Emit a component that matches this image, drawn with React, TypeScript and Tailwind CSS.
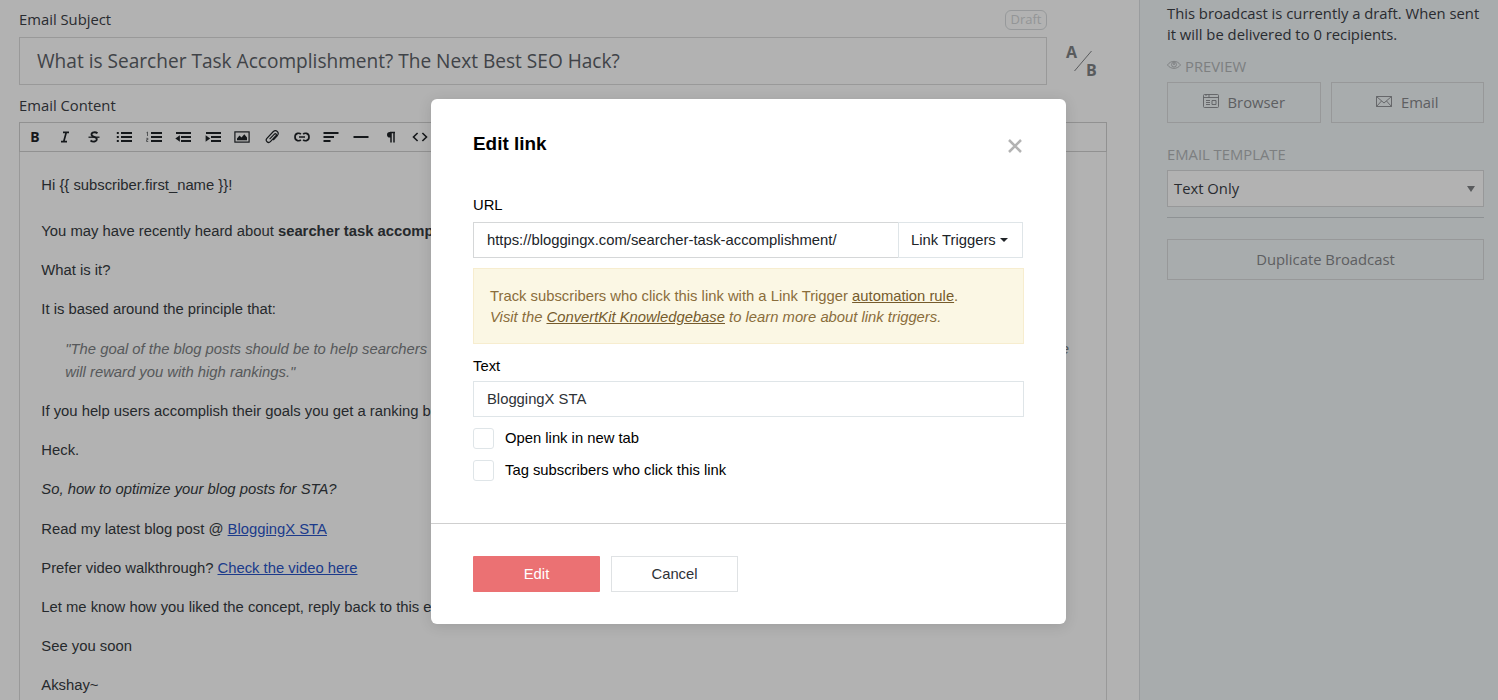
import type { ReactNode } from 'react'

function Icon({ children }: { children: ReactNode }) {
  return (
    <svg
      width="16"
      height="16"
      viewBox="0 0 16 16"
      fill="none"
      stroke="currentColor"
      strokeWidth="1.6"
      className="block shrink-0"
    >
      {children}
    </svg>
  )
}

const letter = 'flex w-4 justify-center text-[14px] leading-4'

const tools: { name: string; icon: ReactNode }[] = [
  { name: 'bold', icon: <span className={`${letter} font-["Noto_Sans"] font-bold`}>B</span> },
  {
    name: 'italic',
    icon: (
      <Icon>
        <path d="M6 3.300h6M4 12.700h6M9.300 3.300L6.700 12.700" strokeWidth="1.700" />
      </Icon>
    )
  },
  {
    name: 'strike',
    icon: (
      <Icon>
        <path
          d="M11.500 4.200C9.500 2.700 5.500 2.900 5.500 5.400c0 3 5.500 2 5.300 4.900-.2 2.700-4.300 2.800-6.300 1.200"
          strokeWidth="1.800"
        />
        <path d="M2.500 8.200h11" strokeWidth="1.300" />
      </Icon>
    )
  },
  {
    name: 'bullets',
    icon: (
      <Icon>
        <path d="M5 4h11M5 8h11M5 12h11" strokeWidth="2.200" />
        <path d="M.8 4h2M.8 8h2M.8 12h2" strokeWidth="2" />
      </Icon>
    )
  },
  {
    name: 'numbers',
    icon: (
      <Icon>
        <path d="M5 4h11M5 8h11M5 12h11" strokeWidth="2.200" />
        <path d="M.5 3.700l1-.7v4M.3 9.300h1.600v1.400H.6v1.800h1.600" strokeWidth=".6" />
      </Icon>
    )
  },
  {
    name: 'outdent',
    icon: (
      <Icon>
        <path d="M1 4h15M6 8h10M6 12h10" strokeWidth="2.200" />
        <path d="M.3 9.500l4.600-3.200v6.400z" fill="currentColor" stroke="none" />
      </Icon>
    )
  },
  {
    name: 'indent',
    icon: (
      <Icon>
        <path d="M1 4h15M6 8h10M6 12h10" strokeWidth="2.200" />
        <path d="M5.200 9.500L.6 6.300v6.400z" fill="currentColor" stroke="none" />
      </Icon>
    )
  },
  {
    name: 'image',
    icon: (
      <Icon>
        <rect x=".9" y="2.900" width="14.200" height="10.200" strokeWidth="1.200" />
        <path d="M3 11.300V9.500l2.500-3 2 2 2.800-3.300L13 8.500v2.800z" fill="currentColor" stroke="none" />
      </Icon>
    )
  },
  {
    name: 'attachment',
    icon: (
      <Icon>
        <path
          d="M5.600 10.200l4.800-5c1.200-1.100 2.600.2 1.600 1.500l-5.600 5.900c-2.200 2.300-5.600-.8-3.500-3.200l6.200-6.600c3-2.800 6.700.6 4.300 3.700l-4.200 4.500"
          strokeWidth="1.200"
        />
      </Icon>
    )
  },
  {
    name: 'link',
    icon: (
      <Icon>
        <path
          d="M6.800 5.200C5.800 3.800 1 3.600 1 8s4.800 4.200 5.800 2.800M9.200 5.200C10.200 3.800 15 3.600 15 8s-4.800 4.200-5.800 2.800M5 8h6"
          strokeWidth="1.700"
        />
      </Icon>
    )
  },
  {
    name: 'align',
    icon: (
      <Icon>
        <path d="M.5 4h15M.5 8h10.500M.5 12h7" strokeWidth="2" />
      </Icon>
    )
  },
  {
    name: 'rule',
    icon: (
      <Icon>
        <path d="M.5 8h15" strokeWidth="2" />
      </Icon>
    )
  },
  {
    name: 'paragraph',
    icon: (
      <Icon>
        <path d="M8 3v10.500M11 3v10.500M12 3.500H7" strokeWidth="1.500" />
        <path d="M8 3H6.800a2.800 2.800 0 000 5.600H8z" fill="currentColor" stroke="none" />
      </Icon>
    )
  },
  {
    name: 'code',
    icon: (
      <Icon>
        <path d="M5.600 4L1.500 8l4.100 4M10.400 4l4.100 4-4.100 4" strokeWidth="1.600" />
      </Icon>
    )
  }
]

function Toolbar() {
  return (
    <div className="flex h-[30px] shrink-0 items-center gap-[13.65px] border border-[#d0d0d0] pl-[7px] text-[#1f2327]">
      {tools.map((t) => (
        <span key={t.name}>{t.icon}</span>
      ))}
    </div>
  )
}

function EditorBody() {
  return (
    <div className='flex flex-1 flex-col gap-4 border-x border-[#dcdcdc] pt-[21.5px] pr-[21px] pl-[21.3px] font-["Liberation_Sans",sans-serif] text-[14.82px] leading-[23.2px] whitespace-nowrap text-[#363b41]'>
      <div>
        <p>Hi {'{{ subscriber.first_name }}'}!</p>
        <br />
        <p>
          You may have recently heard about <b>searcher task accomplishment</b>
        </p>
      </div>
      <p>What is it?</p>
      <p>It is based around the principle that:</p>
      <blockquote className="pr-[16px] pl-6 text-[#7c7f83] italic">
        <div className="flex justify-between">
          <span>"The goal of the blog posts should be to help searchers</span>
          <span>Google</span>
        </div>
        will reward you with high rankings."
      </blockquote>
      <p>If you help users accomplish their goals you get a ranking boost</p>
      <p>Heck.</p>
      <p className="italic">So, how to optimize your blog posts for STA?</p>
      <p>
        Read my latest blog post @ <a className="text-[#2a55c8] underline">BloggingX STA</a>
      </p>
      <p>
        Prefer video walkthrough? <a className="text-[#2a55c8] underline">Check the video here</a>
      </p>
      <p>Let me know how you liked the concept, reply back to this email</p>
      <p>See you soon</p>
      <p>Akshay~</p>
    </div>
  )
}

function Composer() {
  return (
    <main className="flex w-[1139px] flex-col pr-8 pl-[19px]">
      <div className="flex h-[37px] w-[1028px] items-center justify-between pt-[2px]">
        <span>Email Subject</span>
        <span className="flex h-5 w-[42px] items-center justify-center rounded-md border border-[#d8dcde] text-[13px] text-[#d3d6d8]">
          Draft
        </span>
      </div>
      <div className="flex items-center">
        <div className="flex h-12 w-[1028px] shrink-0 items-center border border-[#dcdcdc] px-[17px] text-[19.08px] text-[#5c6167]">
          What is Searcher Task Accomplishment? The Next Best SEO Hack?
        </div>
        <div className="ml-[19px] flex w-8 items-center text-[16px] leading-4 font-bold text-[#808386]">
          <span className="-mt-[18px] w-[9px]">A</span>
          <svg
            width="18"
            height="22"
            viewBox="0 0 18 22"
            className="-mx-px shrink-0"
            stroke="currentColor"
          >
            <path d="M.5 21L17.500 1" />
          </svg>
          <span className="mt-[17px] -ml-[5px]">B</span>
        </div>
      </div>
      <div className="flex h-[37px] items-center pt-[4px]">Email Content</div>
      <Toolbar />
      <EditorBody />
    </main>
  )
}

const sideButton =
  'flex h-[41px] items-center justify-center border border-[#d8dadc] text-[#87898c]'

function Sidebar() {
  return (
    <aside className="w-[359px] border-l border-[#dde0e2] bg-[#f1f6f8] pr-3.5 pl-[27px]">
      <p className="pt-[3px] leading-[21px]">
        This broadcast is currently a draft. When sent it will be delivered to 0 recipients.
      </p>
      <div className="mt-[11px] flex h-5 items-center gap-1 text-[#b3b6b8]">
        <svg
          width="14"
          height="10"
          viewBox="0 0 15 10"
          fill="none"
          stroke="currentColor"
          className="-mt-0.5"
        >
          <path d="M.5 5C4-.2 11-.2 14.500 5 11 9.800 4 9.800.5 5z" />
          <circle cx="7.500" cy="4.600" r="2.600" />
          <circle cx="7.500" cy="4" r=".7" />
        </svg>
        PREVIEW
      </div>
      <div className="mt-[6px] grid grid-cols-2 gap-2.5">
        <div className={`${sideButton} gap-[9px]`}>
          <svg
            width="16"
            height="14"
            viewBox="0 0 16 14"
            fill="none"
            stroke="currentColor"
            strokeWidth=".9"
            className="-mt-[3px]"
          >
            <rect x=".5" y=".5" width="15" height="13" rx="1" />
            <path d="M.5 3.500h15M3 .5v1.500M6 .5v3M3 6.500h4M3 8.500h4M3 10.500h4M9 6.500h4v4H9z" />
          </svg>
          Browser
        </div>
        <div className={`${sideButton} gap-[9px]`}>
          <svg
            width="16"
            height="11"
            viewBox="0 0 16 11"
            fill="none"
            stroke="currentColor"
            strokeWidth=".9"
            className="-mt-[3px]"
          >
            <path d="M.5.500h15v10H.5zM.5.500L8 7l7.500-6.500M.5 10.500l5-5.500M15.500 10.500l-5-5.500" />
          </svg>
          Email
        </div>
      </div>
      <div className="mt-[21px] h-5 leading-5 text-[#b3b6b8]">EMAIL TEMPLATE</div>
      <div className="mt-[6px] flex h-[37px] items-center justify-between border border-[#d8dadc] bg-white pr-2 pl-1.5">
        Text Only
        <svg width="8" height="6" viewBox="0 0 8 6" className="fill-[#808386]">
          <path d="M0 0h8L4 6z" />
        </svg>
      </div>
      <hr className="mt-[10px] border-[#ccd1d4]" />
      <div className={`${sideButton} mt-[21px]`}>Duplicate Broadcast</div>
    </aside>
  )
}

function Checkbox({ label }: { label: string }) {
  return (
    <label className="flex h-[21px] items-center gap-[11px]">
      <span className="size-[21px] rounded-[3px] border border-[#dfe5e8]" />
      {label}
    </label>
  )
}

function EditLinkModal() {
  return (
    <div className='flex h-[525px] w-[635px] flex-col rounded-md bg-white font-["Liberation_Sans",sans-serif] text-[14.8px] text-black shadow-[0_2px_14px_rgba(0,0,0,0.12)]'>
      <div className="h-[424px] px-[42px] pt-[33px]">
        <div className="flex h-6 items-center justify-between">
          <h2 className="text-[18.9px] font-bold">Edit link</h2>
          <svg
            width="14"
            height="14"
            viewBox="0 0 14 14"
            className="mt-1 mr-0.5 stroke-[#b3b3b3]"
            strokeWidth="2.500"
          >
            <path d="M1 1l12 12M13 1L1 13" />
          </svg>
        </div>
        <div className="mt-[39px] h-[26px] leading-5">URL</div>
        <div className="mt-px flex h-9 w-[550px] text-[#202428]">
          <div className="flex w-[426px] items-center border border-[#d5d7d8] pl-[13px]">
            https://bloggingx.com/searcher-task-accomplishment/
          </div>
          <div className="-ml-px flex w-[125px] items-center gap-1 border border-[#dfe5e8] pl-3">
            Link Triggers
            <svg width="8" height="4" viewBox="0 0 8 4" fill="currentColor">
              <path d="M0 0h8L4 4z" />
            </svg>
          </div>
        </div>
        <div className="mt-2.5 h-[76px] w-[551px] border border-[#f7edcf] bg-[#fbf7e4] px-4 pt-[17px] leading-[21px] text-[#8a6d3b]">
          <p>
            Track subscribers who click this link with a Link Trigger{' '}
            <a className="text-[#755b2c] underline">automation rule</a>.
          </p>
          <p className="italic">
            Visit the <a className="text-[#755b2c] underline">ConvertKit Knowledgebase</a> to learn
            more about link triggers.
          </p>
        </div>
        <div className="mt-[10px] h-[27px] leading-6">Text</div>
        <div className="flex h-9 w-[551px] items-center border border-[#dfe5e8] pl-[13px] text-[#2e3237]">
          BloggingX STA
        </div>
        <div className="mt-[11px] flex flex-col gap-[11px]">
          <Checkbox label="Open link in new tab" />
          <Checkbox label="Tag subscribers who click this link" />
        </div>
      </div>
      <div className="flex flex-1 gap-[11px] border-t border-[#cfcfcf] px-[42px] pt-8">
        <button className="h-9 w-[127px] rounded-[1px] bg-[#eb7173] text-white">Edit</button>
        <button className="h-9 w-[127px] border border-[#dfe2e4] text-[#2e3237]">Cancel</button>
      </div>
    </div>
  )
}

export default function App() {
  return (
    <div className='relative flex h-[700px] w-[1498px] overflow-hidden bg-white font-["Open_Sans",sans-serif] text-[14.8px] text-[#3b4046]'>
      <Composer />
      <Sidebar />
      <div className="absolute inset-0 flex justify-center bg-black/30 pt-[99px] pr-px">
        <EditLinkModal />
      </div>
    </div>
  )
}
